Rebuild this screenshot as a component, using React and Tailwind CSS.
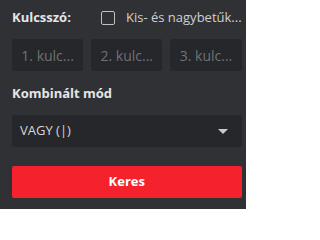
import React from "react";

const KEYWORDS = ["1. kulc...", "2. kulc...", "3. kulc..."];

const App = () => {
  return (
    <div
      className="w-[246px] h-[209px] bg-[#2f3135] text-[#d6d7d9] overflow-hidden flex"
      style={{ fontFamily: '"Open Sans", "Noto Sans", sans-serif' }}
    >
      <div className="flex-1 flex flex-col pl-3 pr-[5px]">
        {/* keyword row */}
        <div className="flex items-center h-[34px] pt-px">
          <span className="w-[89px] text-[13px] font-bold text-[#e4e5e7]">Kulcsszó:</span>
          <span className="w-[14px] h-[14px] border border-[#bfc0c3] rounded-[2px]" />
          <span className="ml-[11px] text-[13px] text-[#cfd0d3] whitespace-nowrap">Kis- és nagybetűk...</span>
        </div>

        <div className="grid grid-cols-3 gap-2 mt-[5px]">
          {KEYWORDS.map((item, index) => (
            <div
              key={index}
              className="h-8 bg-[#25272b] rounded-[2px] flex items-center justify-center text-[14px] text-[#6f7175]"
            >
              {item}
            </div>
          ))}
        </div>

        {/* combine mode */}
        <div className="mt-[12px] text-[13px] font-bold text-[#e4e5e7] h-[20px] leading-[20px]">Kombinált mód</div>

        <div className="mt-[12px] h-8 bg-[#25272b] rounded-[2px] flex items-center justify-between pl-2 pr-[14px]">
          <span className="text-[13px] text-[#d6d7d9]">VAGY (|)</span>
          <svg width="10" height="5" viewBox="0 0 10 5">
            <path d="M0 0 L10 0 L5 5 Z" fill="#c9cacd" />
          </svg>
        </div>

        <button className="mt-[19px] h-8 w-full bg-[#f5222d] rounded-[2px] text-white text-[13px] font-bold">
          Keres
        </button>
      </div>
    </div>
  );
};

export default App;
